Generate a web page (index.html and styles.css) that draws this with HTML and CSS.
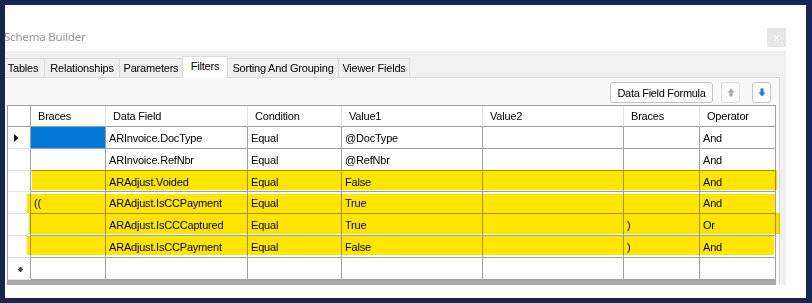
FILE: index.html
```html
<!DOCTYPE html>
<html lang="en">
<head>
  <meta charset="UTF-8">
  <meta name="viewport" content="width=device-width, initial-scale=1.0">
  <title>Schema Builder</title>
  <link rel="stylesheet" href="styles.css">
</head>
<body>
  <div class="window">
    <div class="titlebar">
      <span class="title">Schema Builder</span>
      <span class="close">x</span>
    </div>

    <div class="panel">
      <div class="tabs">
        <div class="tab w-tables">Tables</div>
        <div class="tab w-rel">Relationships</div>
        <div class="tab w-params">Parameters</div>
        <div class="tab active w-filters">Filters</div>
        <div class="tab w-sort">Sorting And Grouping</div>
        <div class="tab w-viewer">Viewer Fields</div>
      </div>

      <div class="page">
        <div class="toolbar">
          <button class="btn formula">Data Field Formula</button>
          <button class="btn arrow disabled" title="Move up">
            <svg width="8" height="9" viewBox="0 0 8 9"><path d="M4 0.5 L7.5 4.5 H5.5 V8.5 H2.5 V4.5 H0.5 Z" fill="#a8a8a8"/></svg>
          </button>
          <button class="btn arrow down" title="Move down">
            <svg width="8" height="9" viewBox="0 0 8 9"><path d="M4 8.5 L7.5 4.5 H5.5 V0.5 H2.5 V4.5 H0.5 Z" fill="#2f6fd8"/></svg>
          </button>
        </div>

        <div class="grid">
          <div class="rows">
            <div class="hd corner"></div>
            <div class="hd">Braces</div>
            <div class="hd">Data Field</div>
            <div class="hd">Condition</div>
            <div class="hd">Value1</div>
            <div class="hd">Value2</div>
            <div class="hd">Braces</div>
            <div class="hd last">Operator</div>

            <div class="rh"><svg width="5" height="8" viewBox="0 0 5 8"><path d="M0 0 L4.5 4 L0 8 Z" fill="#111"/></svg></div>
            <div class="cell selected"></div>
            <div class="cell">ARInvoice.DocType</div>
            <div class="cell">Equal</div>
            <div class="cell">@DocType</div>
            <div class="cell"></div>
            <div class="cell"></div>
            <div class="cell">And</div>

            <div class="rh"></div>
            <div class="cell"></div>
            <div class="cell">ARInvoice.RefNbr</div>
            <div class="cell">Equal</div>
            <div class="cell">@RefNbr</div>
            <div class="cell"></div>
            <div class="cell"></div>
            <div class="cell">And</div>

            <div class="rh"></div>
            <div class="cell"></div>
            <div class="cell">ARAdjust.Voided</div>
            <div class="cell">Equal</div>
            <div class="cell">False</div>
            <div class="cell"></div>
            <div class="cell"></div>
            <div class="cell">And</div>

            <div class="rh"></div>
            <div class="cell">((</div>
            <div class="cell">ARAdjust.IsCCPayment</div>
            <div class="cell">Equal</div>
            <div class="cell">True</div>
            <div class="cell"></div>
            <div class="cell"></div>
            <div class="cell">And</div>

            <div class="rh"></div>
            <div class="cell"></div>
            <div class="cell">ARAdjust.IsCCCaptured</div>
            <div class="cell">Equal</div>
            <div class="cell">True</div>
            <div class="cell"></div>
            <div class="cell">)</div>
            <div class="cell">Or</div>

            <div class="rh"></div>
            <div class="cell"></div>
            <div class="cell">ARAdjust.IsCCPayment</div>
            <div class="cell">Equal</div>
            <div class="cell">False</div>
            <div class="cell"></div>
            <div class="cell">)</div>
            <div class="cell">And</div>

            <div class="rh newrow"><svg width="5" height="5" viewBox="0 0 5 5"><path d="M2.5 0 V5 M0 2.5 H5 M0.7 0.7 L4.3 4.3 M4.3 0.7 L0.7 4.3" stroke="#444" stroke-width="1.1"/></svg></div>
            <div class="cell"></div>
            <div class="cell"></div>
            <div class="cell"></div>
            <div class="cell"></div>
            <div class="cell"></div>
            <div class="cell"></div>
            <div class="cell"></div>
          </div>

          <!-- highlighter marks drawn over the grid -->
          <div class="mark m1"></div>
          <div class="mark m2"></div>
          <div class="mark m3"></div>
          <div class="mark m4"></div>
        </div>
      </div>
    </div>
  </div>
</body>
</html>
```

FILE: styles.css
```css
body {
  margin: 0;
  background: #172650;
  height: 303px;
  overflow: hidden;
  font-family: "Liberation Sans", Arial, sans-serif;
  font-size: 11px;
  letter-spacing: -0.2px;
  color: #000;
}
.window {
  margin: 5px 0 0 5px;
  width: 801px;
  height: 293px;
  background: #fff;
  overflow: hidden;
}
.titlebar {
  height: 46px;
  box-sizing: border-box;
  display: flex;
  align-items: flex-end;
  justify-content: space-between;
  padding: 0 20px 4px 0;
}
.title {
  margin-left: -1px;
  font-family: "Noto Sans", Lato, sans-serif;
  font-size: 11.5px;
  letter-spacing: -0.2px;
  color: #959595;
  line-height: 19px;
  margin-bottom: 1px;
}
.close {
  width: 19px;
  height: 19px;
  background: #e6e6e6;
  color: #fff;
  font-size: 11px;
  text-align: center;
  line-height: 18px;
}
.panel {
  margin-left: -3px;
  width: 784px;
  height: 234px;
  box-sizing: border-box;
  padding-top: 5px;
  background: #f0f0f0;
  overflow: hidden;
}
.tabs {
  display: flex;
  align-items: flex-end;
  height: 21px;
}
.tab {
  height: 19px;
  box-sizing: border-box;
  border: 1px solid #d9d9d9;
  border-left: none;
  border-bottom: none;
  display: flex;
  align-items: center;
  justify-content: center;
}
.tab.active {
  height: 22px;
  margin-bottom: -1px;
  background: #fff;
  position: relative;
  z-index: 1;
  padding-bottom: 4px;
}
.w-tables { width: 43px; }
.w-rel { width: 75px; }
.w-params { width: 63px; }
.w-filters { width: 46px; border-left: 1px solid #d9d9d9; margin-left: -1px; }
.w-sort { width: 111px; }
.w-viewer { width: 71px; }
.page {
  width: 778px;
  height: 220px;
  box-sizing: border-box;
  border: 1px solid #d9d9d9;
  background: #f9f9f9;
  padding: 4px 3px 0 4px;
}
.toolbar {
  display: flex;
  justify-content: flex-end;
  align-items: center;
  height: 21px;
  padding-right: 5px;
  margin-bottom: 2px;
}
.btn {
  height: 21px;
  box-sizing: border-box;
  border: 1px solid #c2c2c2;
  border-radius: 3px;
  background: #fdfdfd;
  font-family: inherit;
  font-size: 11px;
  letter-spacing: -0.3px;
  padding: 0;
  color: #000;
}
.formula {
  width: 103px;
  margin-right: 8px;
}
.arrow {
  width: 19px;
  display: flex;
  align-items: center;
  justify-content: center;
}
.arrow.disabled {
  border-color: #dedede;
  margin-right: 12px;
}
.arrow.down {
  border-color: #bfc6d2;
}
.grid {
  position: relative;
  width: 769px;
  height: 180px;
  box-sizing: border-box;
  border-left: 1px solid #a0a0a0;
  border-top: 1px solid #a0a0a0;
  background: #ababab;
}
.rows {
  display: grid;
  grid-template-columns: 23px 75px 142px 94px 141px 141px 76px 76px;
  grid-template-rows: 21px 22px 22px 21px 22px 22px 22px 22px;
}
.rows > div {
  box-sizing: border-box;
  border-right: 1px solid #a0a0a0;
  border-bottom: 1px solid #a0a0a0;
  background: #fff;
  display: flex;
  align-items: center;
  white-space: nowrap;
  overflow: hidden;
}
.hd {
  padding-left: 7px;
  border-right-color: #e3e3e3 !important;
}
.hd.last {
  border-right-color: #a0a0a0 !important;
}
.hd.corner {
  border-right-color: #a0a0a0 !important;
}
.rh {
  border-bottom-color: #e3e3e3 !important;
  padding-left: 6px;
}
.rh.newrow {
  padding-left: 10px;
  padding-top: 2px;
}
.cell {
  padding-left: 3px;
  padding-top: 1px;
}
.cell.selected {
  background: #0078d7 !important;
}
.mark {
  position: absolute;
  background: #ffe500;
  mix-blend-mode: multiply;
}
.m1 { left: 24px; top: 64px; width: 745px; height: 20px; }
.m2 { left: 19px; top: 88px; width: 748px; height: 19px; }
.m3 { left: 21px; top: 107px; width: 751px; height: 21px; }
.m4 { left: 19px; top: 130px; width: 747px; height: 19px; }
```
